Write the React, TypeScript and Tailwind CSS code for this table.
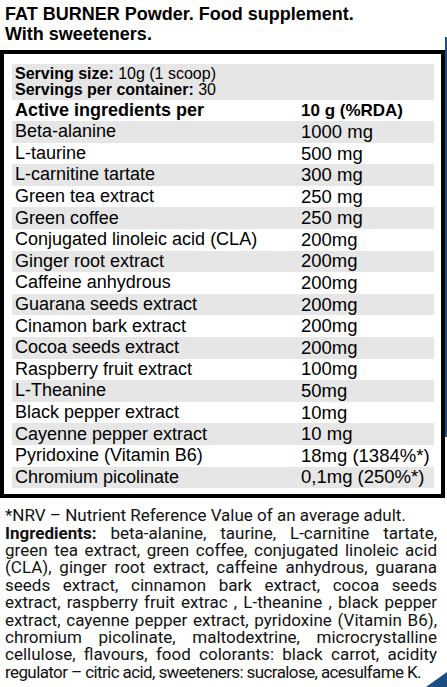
const rows: [string, string][] = [
  ["Beta-alanine", "1000 mg"],
  ["L-taurine", "500 mg"],
  ["L-carnitine tartate", "300 mg"],
  ["Green tea extract", "250 mg"],
  ["Green coffee", "250 mg"],
  ["Conjugated linoleic acid (CLA)", "200mg"],
  ["Ginger root extract", "200mg"],
  ["Caffeine anhydrous", "200mg"],
  ["Guarana seeds extract", "200mg"],
  ["Cinamon bark extract", "200mg"],
  ["Cocoa seeds extract", "200mg"],
  ["Raspberry fruit extract", "100mg"],
  ["L-Theanine", "50mg"],
  ["Black pepper extract", "10mg"],
  ["Cayenne pepper extract", "10 mg"],
  ["Pyridoxine (Vitamin B6)", "18mg (1384%*)"],
  ["Chromium picolinate", "0,1mg (250%*)"],
];

export default function App() {
  return (
    <div className="relative w-[447px] h-[687px] overflow-hidden bg-white text-black">
      {/* title */}
      <div className="pt-[4px] pl-[5px] font-['Liberation_Sans',Arial,sans-serif] font-bold text-[18px] leading-[20px]">
        <p>FAT BURNER Powder. Food supplement.</p>
        <p>With sweeteners.</p>
      </div>

      {/* nutrition box */}
      <div className="mt-[6px] w-[445px] border-4 border-black pt-[10px] pb-[6px] pl-[8px] pr-[7px] font-['Liberation_Sans',Arial,sans-serif]">
        <div className="bg-[#e6e6e6] py-[2px] pl-[3px] text-[16px] leading-[16px]">
          <p>
            <span className="font-bold">Serving size:</span> 10g (1 scoop)
          </p>
          <p>
            <span className="font-bold">Servings per container:</span> 30
          </p>
        </div>
        <div className="flex h-[21px] items-center font-bold">
          <div className="w-[289px] pl-[3px] text-[18px]">Active ingredients per</div>
          <div className="text-[17px]">10 g (%RDA)</div>
        </div>
        {rows.map(([name, val], i) => (
          <div
            key={name}
            className={`flex h-[21.6px] items-center text-[18px] ${
              i % 2 === 0 ? "bg-[#e6e6e6]" : "bg-white"
            }`}
          >
            <div className="w-[289px] pl-[3px]">{name}</div>
            <div className="text-[18.5px]">{val}</div>
          </div>
        ))}
      </div>

      {/* footer text */}
      <div className="mt-[9px] pl-[5px] pr-[10px] font-['Roboto',sans-serif] text-[17px] leading-[17.4px] text-[#111]">
        <p>*NRV – Nutrient Reference Value of an average adult.</p>
        <p className="text-justify [text-align-last:justify]">
          <span className="font-bold">Ingredients:</span> beta-alanine, taurine, L-carnitine tartate,
          green tea extract, green coffee, conjugated linoleic acid (CLA), ginger root extract,
          caffeine anhydrous, guarana seeds extract, cinnamon bark extract, cocoa seeds extract,
          raspberry fruit extrac , L-theanine , black pepper extract, cayenne pepper extract,
          pyridoxine (Vitamin B6), chromium picolinate, maltodextrine, microcrystalline cellulose,
          flavours, food colorants: black carrot, acidity
        </p>
        <p className="whitespace-nowrap tracking-[-0.6px]">
          regulator – citric acid, sweeteners: sucralose, acesulfame K.
        </p>
      </div>

      {/* decorative edge */}
      <div className="absolute right-0 top-[37px] h-[400px] w-[2px] bg-[#1c4e80]" />
      <svg className="absolute right-0 bottom-0" width="21" height="15" viewBox="0 0 21 15">
        <polygon points="0,15 21,0 21,15" fill="#1c4e80" />
      </svg>
    </div>
  );
}
